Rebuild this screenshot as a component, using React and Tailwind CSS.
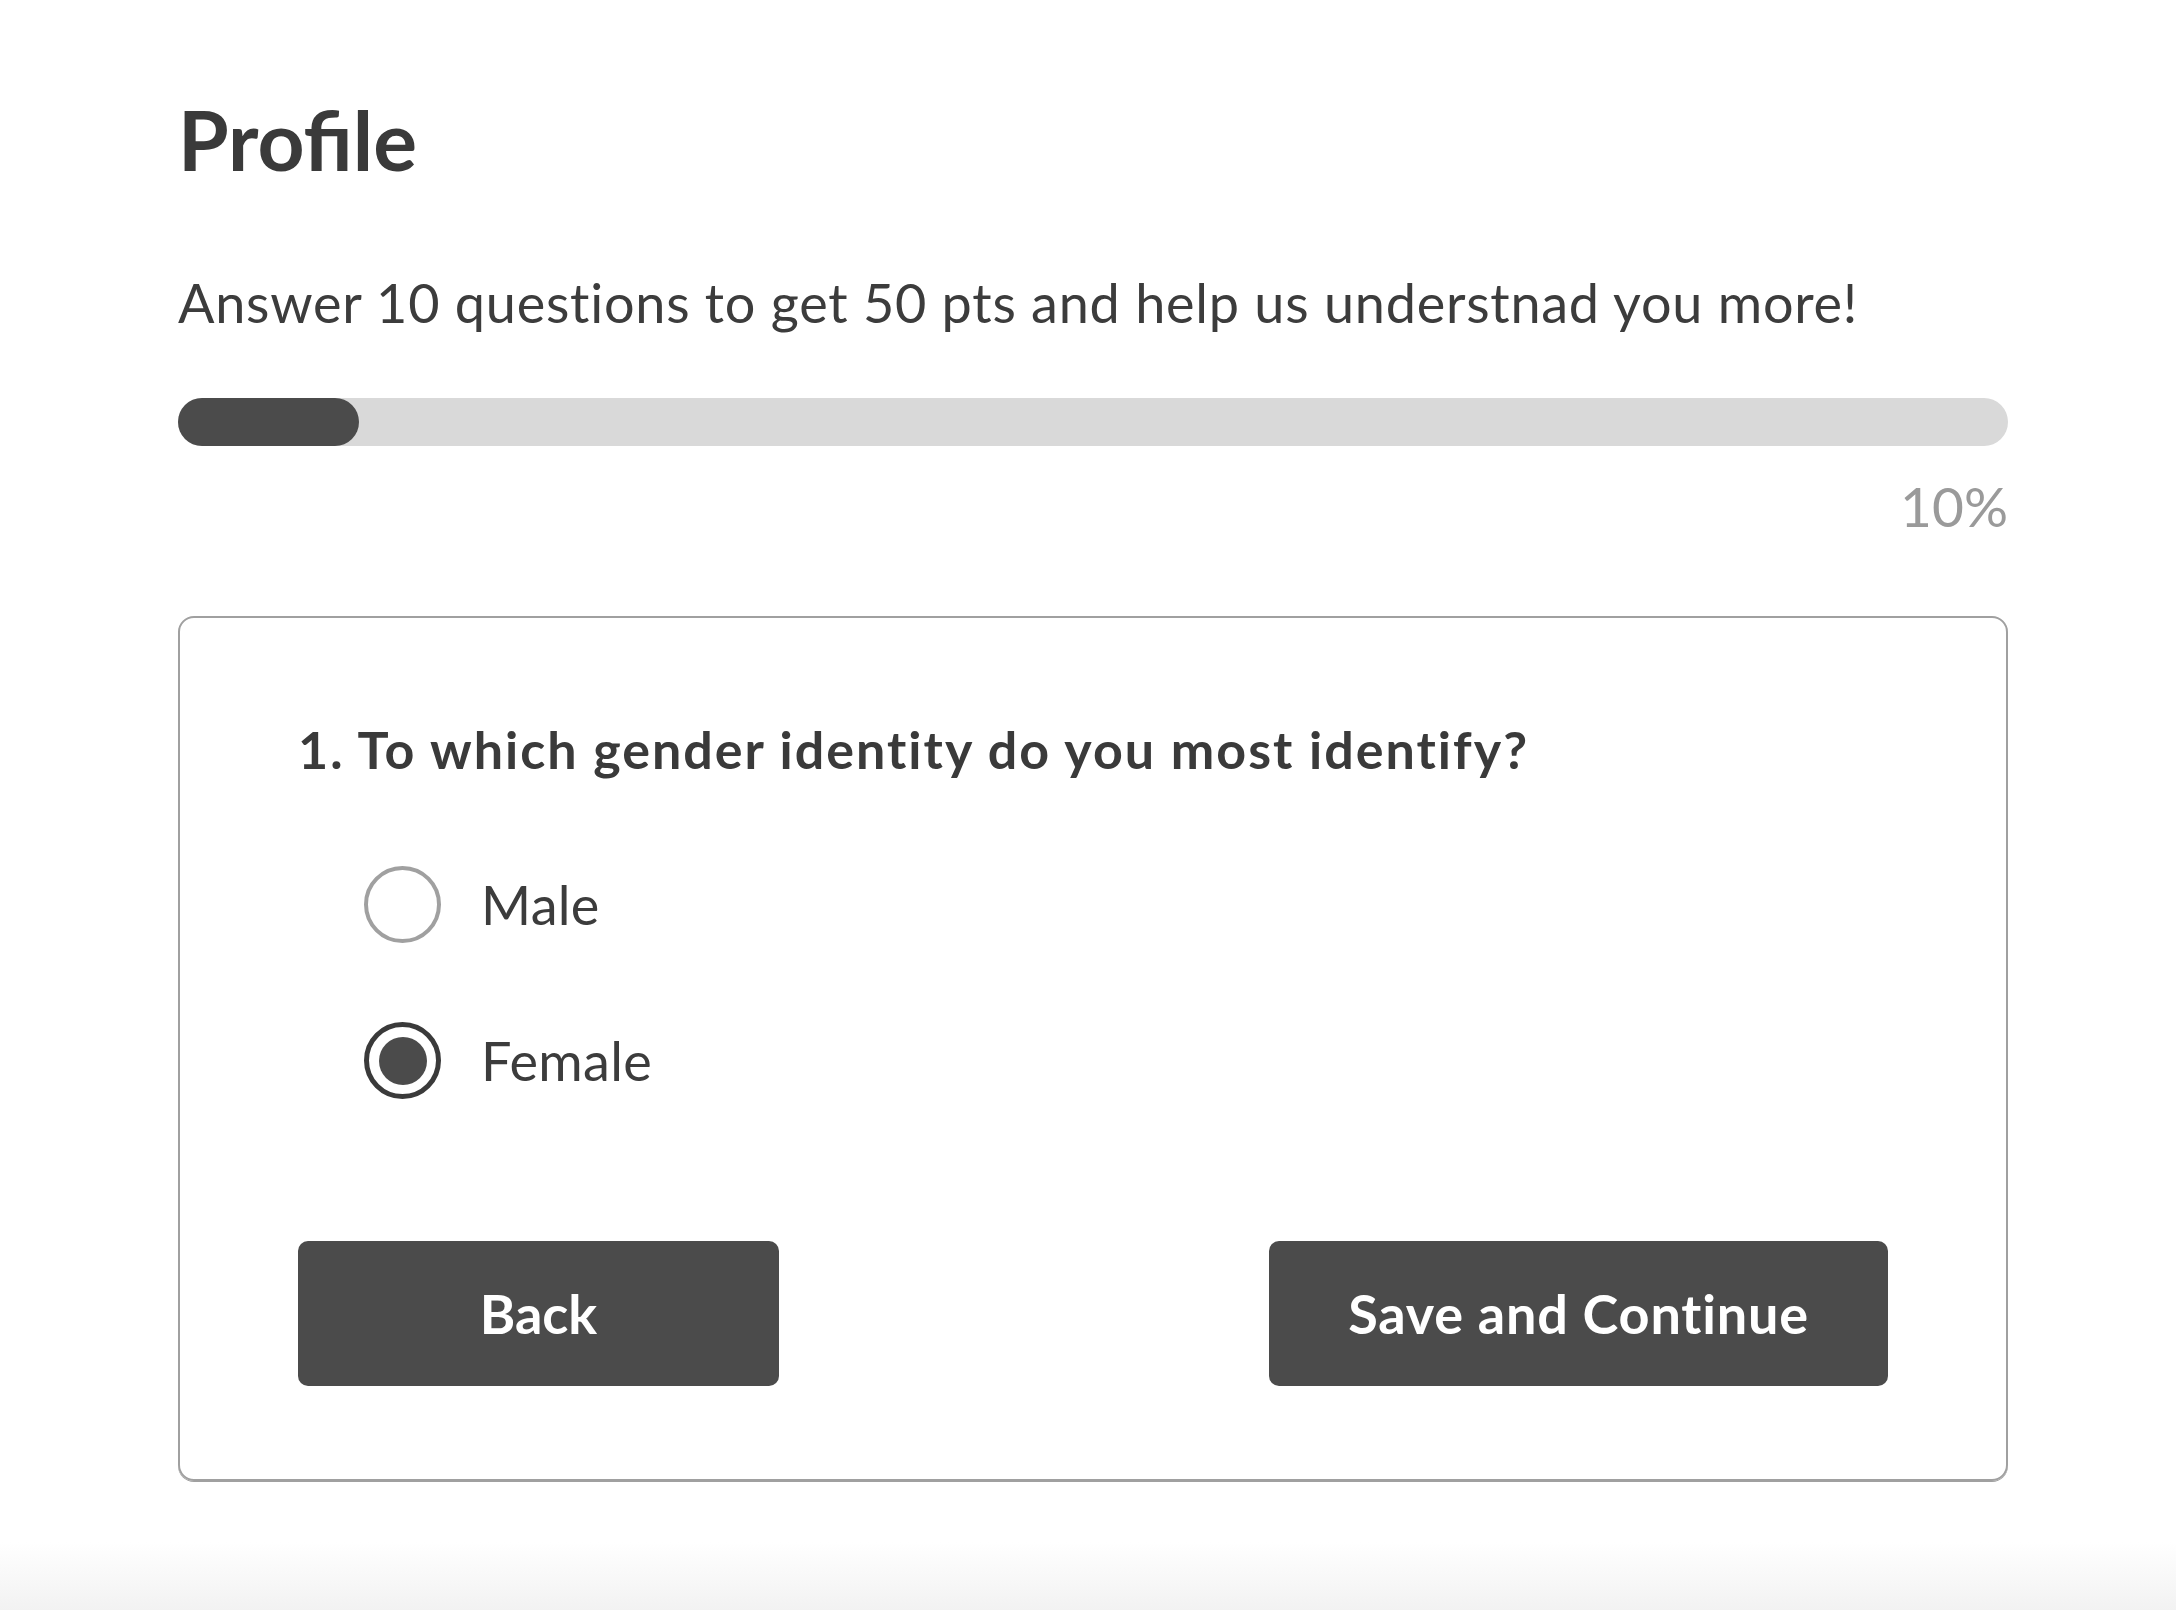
import { useState } from "react";

const options = ["Male", "Female"];

function Radio({ label, checked, onSelect }) {
  return (
    <button
      type="button"
      onClick={onSelect}
      className="flex items-center gap-[40px] h-[77px] text-left"
    >
      {checked ? (
        <span className="flex items-center justify-center w-[77px] h-[77px] rounded-full border-[5px] border-[#3a3a3a] bg-white">
          <span className="w-[48px] h-[48px] rounded-full bg-[#4b4b4b]" />
        </span>
      ) : (
        <span className="w-[77px] h-[77px] rounded-full border-[4px] border-[#a0a0a0] bg-white" />
      )}
      <span className="text-[54px] leading-none tracking-[0.3px] text-[#3c3c3c]">{label}</span>
    </button>
  );
}

export default function App() {
  const [answer, setAnswer] = useState("Female");
  const progress = 10;

  return (
    <div
      className="min-h-[1610px] flex flex-col bg-white text-[#3c3c3c]"
      style={{ fontFamily: "Lato, 'Open Sans', sans-serif" }}
    >
      <main className="pl-[178px] pr-[168px] pt-[98px] flex-1">
        {/* Header */}
        <h1 className="text-[82px] font-bold leading-none text-[#3a3a3a]">Profile</h1>
        <p className="mt-[96px] text-[54px] leading-none tracking-[0.75px]">
          Answer 10 questions to get 50 pts and help us understnad you more!
        </p>

        {/* Progress */}
        <div className="mt-[68px] h-[48px] rounded-full bg-[#d9d9d9]">
          <div className="h-full w-[181px] rounded-full bg-[#4b4b4b]" />
        </div>
        <div className="mt-[33px] text-right text-[55px] leading-none text-[#9a9a9a]">
          {progress}%
        </div>

        {/* Question card */}
        <section className="mt-[82px] rounded-[16px] border-2 border-[#a0a0a0] shadow-[0_1px_0_#a0a0a0] pt-[105px] pb-[93px] px-[118px]">
          <h2 className="text-[52px] font-bold leading-none tracking-[2px] text-[#3a3a3a]">
            1. To which gender identity do you most identify?
          </h2>

          <div className="mt-[91px] ml-[66px] flex flex-col gap-[79px]">
            {options.map((o) => (
              <Radio key={o} label={o} checked={answer === o} onSelect={() => setAnswer(o)} />
            ))}
          </div>

          <div className="mt-[142px] flex justify-between">
            <button className="w-[481px] h-[145px] rounded-[10px] bg-[#4b4b4b] text-white text-[54px] font-bold">
              Back
            </button>
            <button className="w-[619px] h-[145px] rounded-[10px] bg-[#4b4b4b] text-white text-[54px] font-bold tracking-[0.8px]">
              Save and Continue
            </button>
          </div>
        </section>
      </main>

      <div className="h-[68px] bg-gradient-to-b from-white to-[#f2f2f2]" />
    </div>
  );
}
